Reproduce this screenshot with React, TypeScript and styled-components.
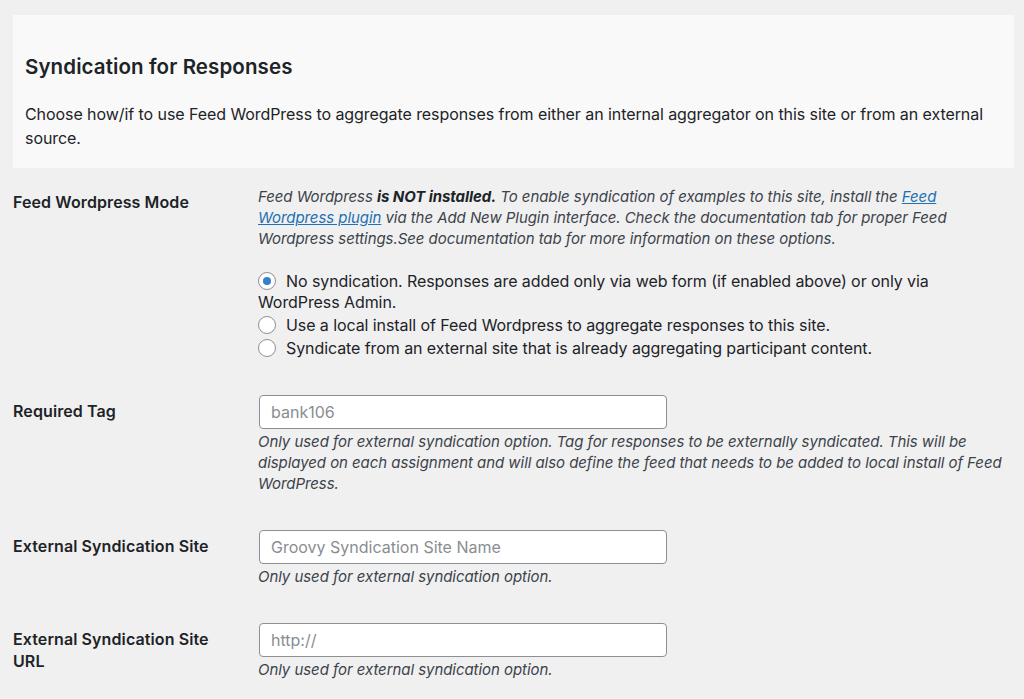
import React from "react";
import styled, { createGlobalStyle } from "styled-components";

const Global = createGlobalStyle`
  html, body { margin: 0; padding: 0; background: #f0f0f1; }
  body {
    font-family: Inter, "Noto Sans", "Liberation Sans", sans-serif;
    color: #1d2327;
    font-size: 16px;
  }
  * { box-sizing: border-box; }
`;

const Page = styled.div`
  padding: 15px 10px 0 13px;
`;

const Intro = styled.section`
  background: #f9f9f9;
  padding: 38px 12px 18px 12px;
`;

const Title = styled.h2`
  margin: 0 0 21px 0;
  font-size: 20.5px;
  line-height: 28px;
  font-weight: 600;
  letter-spacing: 0.1px;
`;

const Lead = styled.p`
  margin: 0;
  font-size: 16px;
  line-height: 24px;
  letter-spacing: -0.07px;
`;

const Row = styled.div`
  display: flex;
  align-items: flex-start;
`;

const Label = styled.div`
  width: 245px;
  flex: none;
  padding: 23px 40px 0 0;
  font-size: 16px;
  line-height: 22px;
  font-weight: 600;
  letter-spacing: 0.1px;
`;

const Field = styled.div`
  flex: 1;
  padding: 18px 0;
`;

const Note = styled.p<{ $gap?: number }>`
  margin: ${(p) => (p.$gap ?? 0)}px 0 0 0;
  font-size: 15px;
  line-height: 21px;
  font-style: italic;
  color: #3c434a;
  max-width: 745px;
  letter-spacing: -0.06px;
  strong { font-weight: 700; color: #1d2327; }
  a { color: #2271b1; text-decoration: underline; }
`;

const RadioList = styled.div`
  margin-top: 22px;
  display: flex;
  flex-direction: column;
  gap: 2px;
`;

const RadioLabel = styled.label`
  display: block;
  font-size: 16px;
  line-height: 21px;
  color: #1d2327;
  max-width: 700px;
  letter-spacing: -0.08px;
`;

const Radio = styled.span<{ $on?: boolean }>`
  display: inline-block;
  position: relative;
  width: 18px;
  height: 18px;
  border: 1px solid #8c8f94;
  border-radius: 50%;
  background: #fff;
  vertical-align: -3px;
  margin-right: 10px;
  &::after {
    content: "";
    display: ${(p) => (p.$on ? "block" : "none")};
    position: absolute;
    left: 4px;
    top: 4px;
    width: 8px;
    height: 8px;
    border-radius: 50%;
    background: #3582c4;
  }
`;

const Input = styled.input`
  display: block;
  width: 408px;
  height: 34px;
  margin: 0 0 0 1px;
  padding: 0 11px;
  border: 1px solid #8c8f94;
  border-radius: 4px;
  background: #fff;
  font-family: inherit;
  font-size: 16px;
  color: #2c3338;
  &::placeholder { color: #8a8d91; }
`;

const radios = [
  { on: true, text: "No syndication. Responses are added only via web form (if enabled above) or only via WordPress Admin." },
  { on: false, text: "Use a local install of Feed Wordpress to aggregate responses to this site." },
  { on: false, text: "Syndicate from an external site that is already aggregating participant content." },
];

export default function App() {
  return (
    <Page>
      <Global />
      <Intro>
        <Title>Syndication for Responses</Title>
        <Lead>
          Choose how/if to use Feed WordPress to aggregate responses from either an internal aggregator on this site or from an external source.
        </Lead>
      </Intro>

      <Row>
        <Label>Feed Wordpress Mode</Label>
        <Field>
          <Note>
            Feed Wordpress <strong>is NOT installed.</strong> To enable syndication of examples to this site, install the{" "}
            <a href="#">Feed Wordpress plugin</a> via the Add New Plugin interface. Check the documentation tab for proper Feed Wordpress settings.See documentation tab for more information on these options.
          </Note>
          <RadioList>
            {radios.map((r) => (
              <RadioLabel key={r.text}>
                <Radio $on={r.on} />
                {r.text}
              </RadioLabel>
            ))}
          </RadioList>
        </Field>
      </Row>

      <Row>
        <Label>Required Tag</Label>
        <Field>
          <Input placeholder="bank106" />
          <Note $gap={2}>
            Only used for external syndication option. Tag for responses to be externally syndicated. This will be displayed on each assignment and will also define the feed that needs to be added to local install of Feed WordPress.
          </Note>
        </Field>
      </Row>

      <Row>
        <Label>External Syndication Site</Label>
        <Field>
          <Input placeholder="Groovy Syndication Site Name" />
          <Note $gap={2}>Only used for external syndication option.</Note>
        </Field>
      </Row>

      <Row>
        <Label>External Syndication Site URL</Label>
        <Field>
          <Input placeholder="http://" />
          <Note $gap={2}>Only used for external syndication option.</Note>
        </Field>
      </Row>
    </Page>
  );
}
